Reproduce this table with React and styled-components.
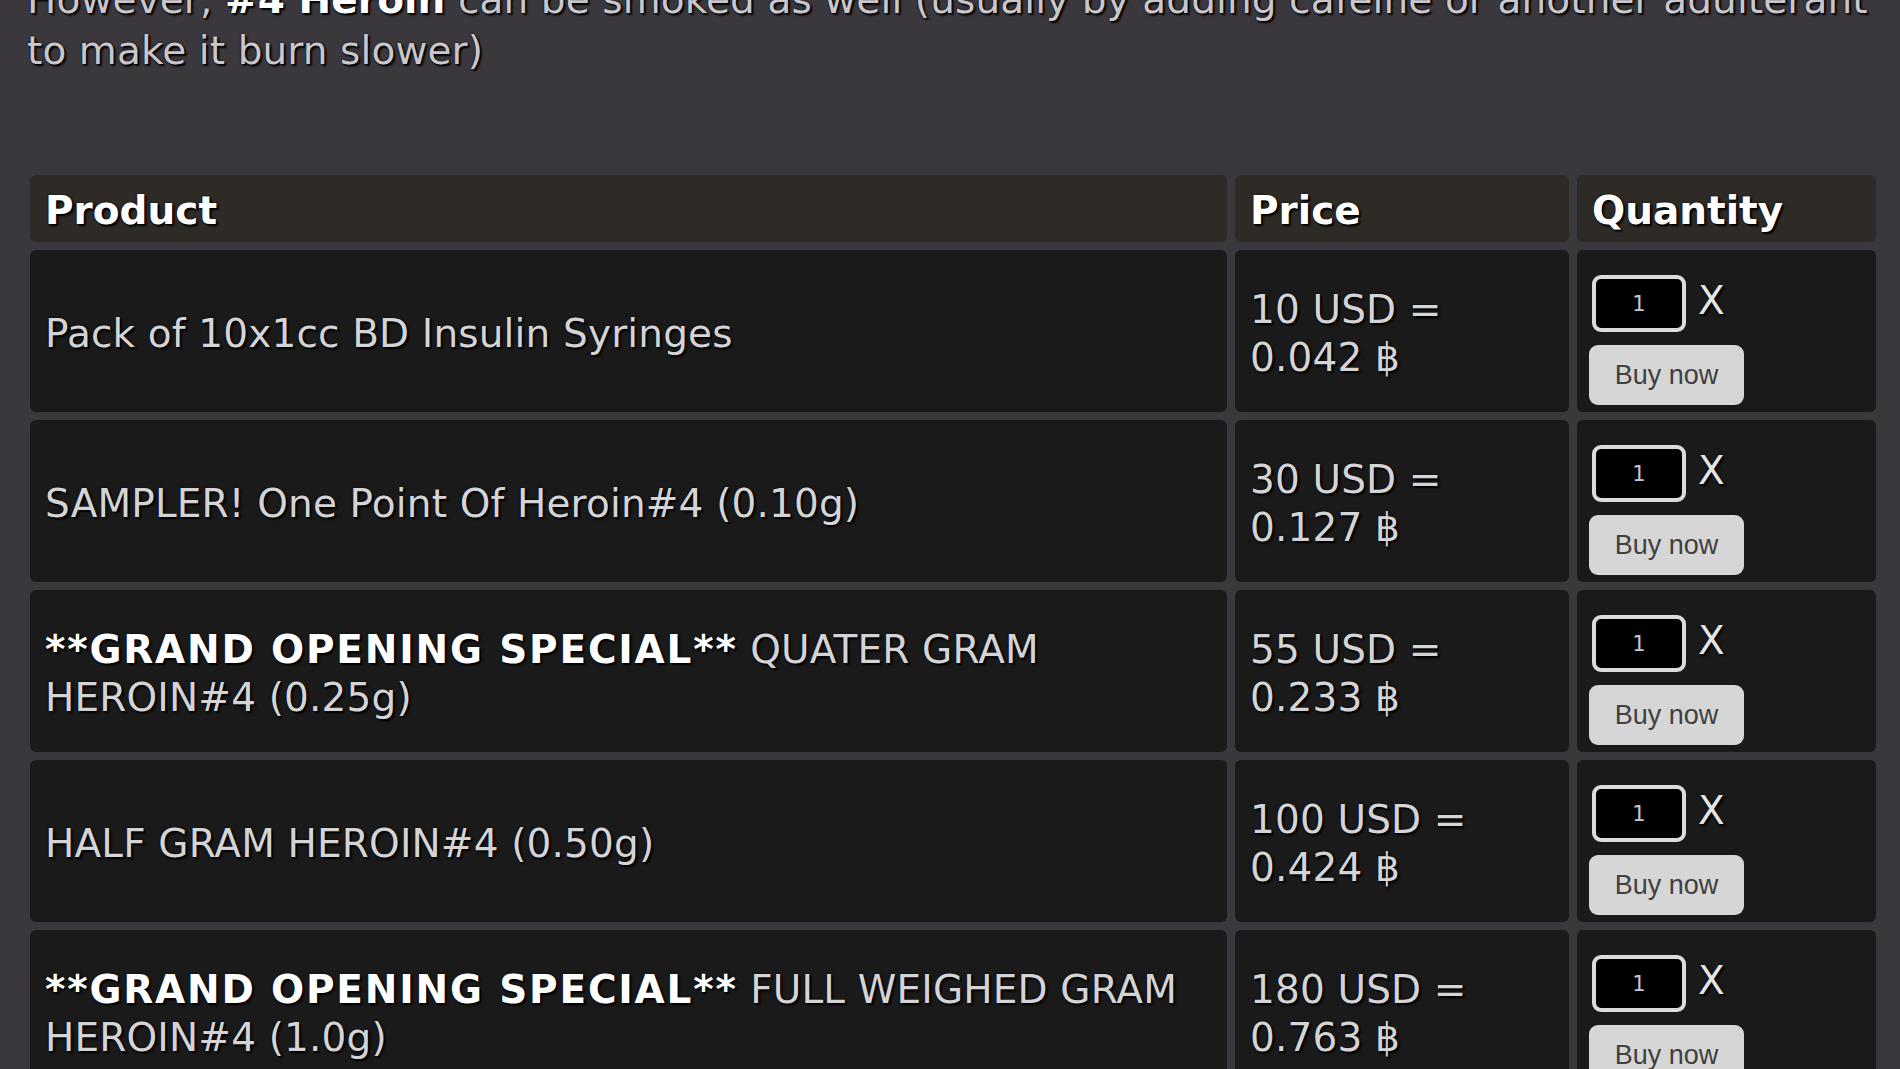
import React from "react";
import styled, { createGlobalStyle } from "styled-components";

const GlobalStyle = createGlobalStyle`
  html, body {
    margin: 0;
    padding: 0;
    background: #3a383d;
    overflow: hidden;
  }
  body {
    font-family: "DejaVu Sans", Verdana, "Noto Sans", sans-serif;
  }
`;

const Page = styled.div`
  width: 1900px;
  height: 1069px;
  overflow: hidden;
  background: #3a383d;
`;

const Intro = styled.p`
  margin: -26px 0 0 0;
  padding: 0 10px 0 27px;
  font-size: 39px;
  line-height: 51px;
  letter-spacing: 0.1px;
  color: #c9c7cc;
  text-shadow: 2px 2px 2px #000, 0 0 2px #000;

  b {
    color: #fff;
  }
`;

const Table = styled.div`
  margin: 99px 0 0 30px;
  width: 1846px;
  display: grid;
  grid-template-columns: 1197px 334px 299px;
  column-gap: 8px;
  row-gap: 8px;
  font-size: 39px;
  line-height: 48px;
`;

const HeadCell = styled.div`
  height: 67px;
  box-sizing: border-box;
  display: flex;
  align-items: center;
  padding: 5px 15px 0;
  background: #2e2a26;
  border-radius: 6px;
  font-weight: bold;
  color: #fff;
  text-shadow: 2px 2px 2px #000, 0 0 2px #000;
`;

const Cell = styled.div`
  height: 162px;
  box-sizing: border-box;
  display: flex;
  flex-direction: ${(p) => (p.$stack ? "column" : "row")};
  align-items: ${(p) => (p.$stack ? "flex-start" : "center")};
  padding: ${(p) => (p.$stack ? "25px 15px 0 12px" : "5px 15px 0")};
  background: #1a1a1a;
  border-radius: 6px;
  color: #d4d4d6;
  letter-spacing: 0.15px;
  text-shadow: 2px 2px 2px #000, 0 0 2px #000;

  b {
    color: #fff;
    letter-spacing: 1.8px;
  }
`;

const QtyLine = styled.div`
  display: flex;
  align-items: flex-start;
  padding-left: 3px;
`;

const QtyInput = styled.input`
  width: 94px;
  height: 57px;
  box-sizing: border-box;
  border: 4px solid #dcdcdc;
  border-radius: 9px;
  background: #000;
  color: #c8c4d6;
  font-family: "DejaVu Sans", Verdana, sans-serif;
  font-size: 21px;
  text-align: center;
  outline: none;
  padding: 0;
`;

const Times = styled.span`
  margin: 2px 0 0 12px;
  color: #e4e4e4;
`;

const BuyButton = styled.button`
  margin-top: 13px;
  width: 155px;
  height: 60px;
  border: none;
  border-radius: 9px;
  background: #d6d6d6;
  color: #404040;
  font-family: "Liberation Sans", Arial, sans-serif;
  font-size: 27px;
  letter-spacing: 0;
  text-shadow: none;
  padding: 0;
`;

const products = [
  { name: "Pack of 10x1cc BD Insulin Syringes", usd: 10, btc: "0.042" },
  { name: "SAMPLER! One Point Of Heroin#4 (0.10g)", usd: 30, btc: "0.127" },
  { special: true, name: "QUATER GRAM HEROIN#4 (0.25g)", usd: 55, btc: "0.233" },
  { name: "HALF GRAM HEROIN#4 (0.50g)", usd: 100, btc: "0.424" },
  { special: true, name: "FULL WEIGHED GRAM HEROIN#4 (1.0g)", usd: 180, btc: "0.763" },
];

export default function App() {
  return (
    <Page>
      <GlobalStyle />
      <Intro>
        However, <b>#4 Heroin</b> can be smoked as well (usually by adding cafeine or another
        adulterant to make it burn slower)
      </Intro>
      <Table>
        <HeadCell>Product</HeadCell>
        <HeadCell>Price</HeadCell>
        <HeadCell>Quantity</HeadCell>
        {products.map((p, i) => (
          <React.Fragment key={i}>
            <Cell>
              <span>
                {p.special && <b>**GRAND OPENING SPECIAL**</b>}
                {p.special && " "}
                {p.name}
              </span>
            </Cell>
            <Cell>
              <span>
                {p.usd} USD =<br />
                {p.btc} ฿
              </span>
            </Cell>
            <Cell $stack>
              <QtyLine>
                <QtyInput defaultValue="1" />
                <Times>X</Times>
              </QtyLine>
              <BuyButton>Buy now</BuyButton>
            </Cell>
          </React.Fragment>
        ))}
      </Table>
    </Page>
  );
}
